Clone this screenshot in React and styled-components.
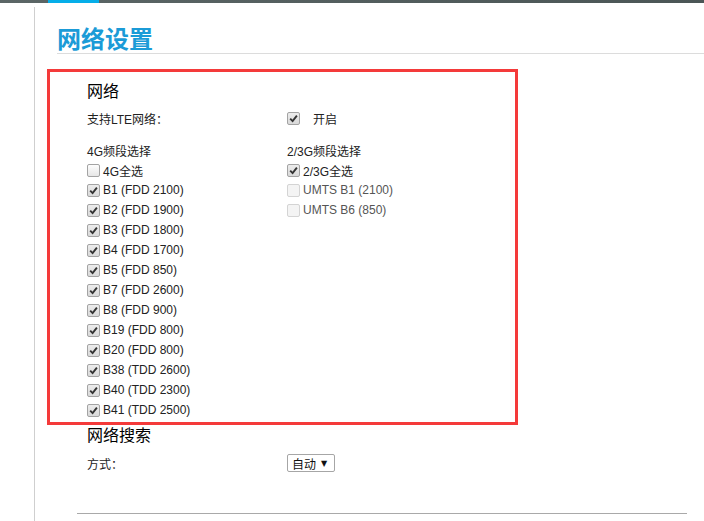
import React from 'react';
import styled, { createGlobalStyle } from 'styled-components';

const GlobalStyle = createGlobalStyle`
  html, body {
    margin: 0;
    padding: 0;
    background: #fff;
  }
  body {
    font-family: "Liberation Sans", Arial, "Noto Sans CJK SC", sans-serif;
    color: #222;
    font-size: 12px;
  }
`;

const TopBar = styled.div`
  height: 3px;
  background: linear-gradient(90deg, #5b6666, #4b5656);
  display: flex;
`;

const TopTab = styled.div`
  margin-left: 48px;
  width: 51px;
  background: #05aee9;
`;

const Main = styled.div`
  display: flex;
  margin-top: 4px;
  min-height: 514px;
`;

const Side = styled.div`
  width: 34px;
  flex: none;
  border-right: 1px solid #cfcfcf;
`;

const Content = styled.div`
  flex: 1;
  padding-left: 12px;
  display: flex;
  flex-direction: column;
`;

const PageTitle = styled.h1`
  margin: 15px 0 0 10px;
  font-family: "Noto Sans CJK SC", sans-serif;
  font-size: 24px;
  font-weight: 700;
  line-height: 31px;
  color: #1b9bd7;
  border-bottom: 1px solid #dcdcdc;
`;

const Frame = styled.section`
  box-sizing: border-box;
  width: 471px;
  margin-top: 15px;
  border: 3px solid #f43a3a;
  padding: 8px 0 2px 37px;
`;

const Section = styled.section`
  padding-left: 40px;
`;

const Heading = styled.h2`
  margin: 0;
  font-family: "Noto Sans CJK SC", sans-serif;
  font-size: 16px;
  font-weight: 400;
  line-height: ${p => p.$lh || 20}px;
  color: #000;
`;

const Row = styled.div`
  display: grid;
  grid-template-columns: 200px 1fr;
  align-items: center;
  height: 20px;
  margin-top: ${p => p.$gap || 0}px;
`;

const Label = styled.span`
  font-family: "Liberation Sans", Arial, "Noto Sans CJK SC", sans-serif;
  font-size: 12px;
  color: #222;
`;

const Columns = styled.div`
  display: grid;
  grid-template-columns: 200px 1fr;
  margin-top: 12px;
`;

const Col = styled.div`
  display: flex;
  flex-direction: column;
`;

const Line = styled.div`
  height: 20px;
  display: flex;
  align-items: center;
`;

const Check = styled.label`
  display: flex;
  align-items: center;
  gap: ${p => p.$gap || 3}px;
  font-size: 12px;
  color: ${p => (p.$disabled ? '#555' : '#222')};
`;

const Box = styled.span`
  box-sizing: border-box;
  width: 13px;
  height: 13px;
  border-radius: 2px;
  border: 1px solid ${p => (p.$disabled ? '#d4d4d4' : '#a3a3a3')};
  background: ${p =>
    p.$disabled
      ? '#f4f4f4'
      : p.$checked
      ? 'linear-gradient(#ececec, #d9d9d9)'
      : 'linear-gradient(#fdfdfd, #e6e6e6)'};
  display: flex;
  align-items: center;
  justify-content: center;
  flex: none;
`;

const Select = styled.div`
  box-sizing: border-box;
  width: 48px;
  height: 18px;
  border: 1px solid #a6a6a6;
  border-radius: 2px;
  display: flex;
  align-items: center;
  gap: 5px;
  padding: 0 0 0 4px;
  font-family: "Noto Sans CJK SC", sans-serif;
  font-size: 12px;
  color: #111;
`;

const Arrow = styled.span`
  font-size: 8px;
  font-family: "DejaVu Sans", sans-serif;
`;

const Rule = styled.div`
  margin: 40px 0 0 30px;
  width: 610px;
  height: 1px;
  background: #a9a9a9;
`;

const Checkbox = ({ checked, disabled, children, gap }) => (
  <Check $disabled={disabled} $gap={gap}>
    <Box $checked={checked} $disabled={disabled}>
      {checked && (
        <svg width="9" height="9" viewBox="0 0 9 9">
          <path d="M1.2 4.6 L3.6 7.1 L7.9 1.6" fill="none" stroke="#333" strokeWidth="1.9" />
        </svg>
      )}
    </Box>
    <span>{children}</span>
  </Check>
);

const bands4g = [
  'B1 (FDD 2100)',
  'B2 (FDD 1900)',
  'B3 (FDD 1800)',
  'B4 (FDD 1700)',
  'B5 (FDD 850)',
  'B7 (FDD 2600)',
  'B8 (FDD 900)',
  'B19 (FDD 800)',
  'B20 (FDD 800)',
  'B38 (TDD 2600)',
  'B40 (TDD 2300)',
  'B41 (TDD 2500)',
];

const bands3g = ['UMTS B1 (2100)', 'UMTS B6 (850)'];

export default function App() {
  return (
    <>
      <GlobalStyle />
      <TopBar>
        <TopTab />
      </TopBar>
      <Main>
        <Side />
        <Content>
          <PageTitle>网络设置</PageTitle>
          <Frame>
            <Heading>网络</Heading>
            <Row $gap={8}>
              <Label>支持LTE网络：</Label>
              <Checkbox checked gap={13}>开启</Checkbox>
            </Row>
            <Columns>
              <Col>
                <Line><Label>4G频段选择</Label></Line>
                <Line><Checkbox>4G全选</Checkbox></Line>
                {bands4g.map(b => (
                  <Line key={b}><Checkbox checked>{b}</Checkbox></Line>
                ))}
              </Col>
              <Col>
                <Line><Label>2/3G频段选择</Label></Line>
                <Line><Checkbox checked>2/3G全选</Checkbox></Line>
                {bands3g.map(b => (
                  <Line key={b}><Checkbox disabled>{b}</Checkbox></Line>
                ))}
              </Col>
            </Columns>
          </Frame>
          <Section>
            <Heading $lh={18}>网络搜索</Heading>
            <Row $gap={10}>
              <Label>方式：</Label>
              <Select>
                <span>自动</span>
                <Arrow>▼</Arrow>
              </Select>
            </Row>
          </Section>
          <Rule />
        </Content>
      </Main>
    </>
  );
}
